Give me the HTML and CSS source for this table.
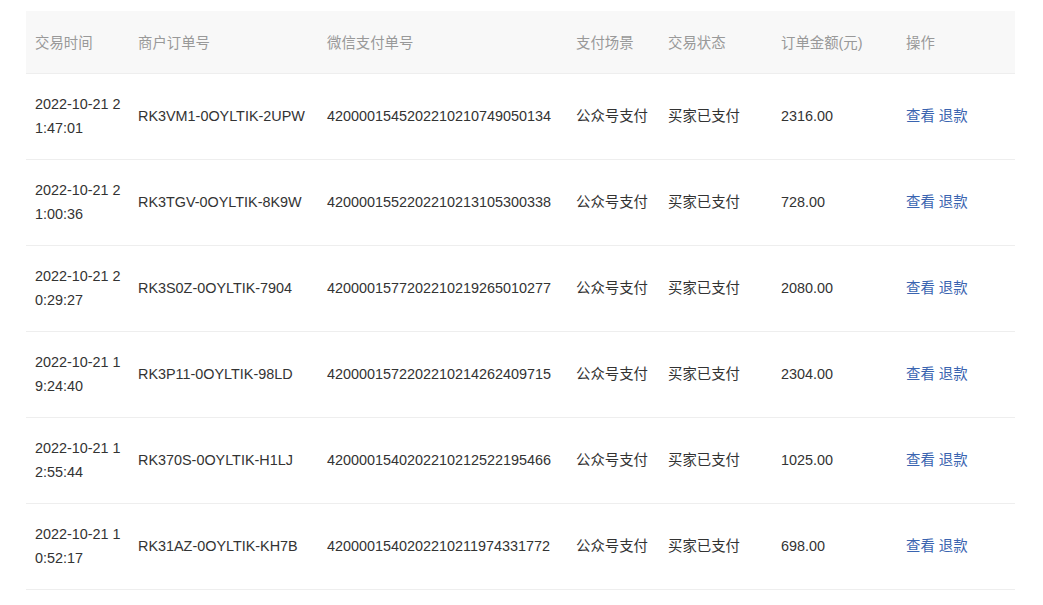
FILE: index.html
```html
<!DOCTYPE html>
<html lang="zh">
<head>
<meta charset="utf-8">
<title>交易记录</title>
<link rel="stylesheet" href="styles.css">
</head>
<body>
<table class="orders">
  <colgroup>
    <col class="c-time"><col class="c-mch"><col class="c-wx"><col class="c-scene"><col class="c-state"><col class="c-amt"><col class="c-op">
  </colgroup>
  <thead>
    <tr><th>交易时间</th><th>商户订单号</th><th>微信支付单号</th><th>支付场景</th><th>交易状态</th><th>订单金额(元)</th><th>操作</th></tr>
  </thead>
  <tbody>
    <tr><td class="time">2022-10-21 21:47:01</td><td>RK3VM1-0OYLTIK-2UPW</td><td>4200001545202210210749050134</td><td>公众号支付</td><td>买家已支付</td><td>2316.00</td><td><a href="#">查看</a> <a href="#">退款</a></td></tr>
    <tr><td class="time">2022-10-21 21:00:36</td><td>RK3TGV-0OYLTIK-8K9W</td><td>4200001552202210213105300338</td><td>公众号支付</td><td>买家已支付</td><td>728.00</td><td><a href="#">查看</a> <a href="#">退款</a></td></tr>
    <tr><td class="time">2022-10-21 20:29:27</td><td>RK3S0Z-0OYLTIK-7904</td><td>4200001577202210219265010277</td><td>公众号支付</td><td>买家已支付</td><td>2080.00</td><td><a href="#">查看</a> <a href="#">退款</a></td></tr>
    <tr><td class="time">2022-10-21 19:24:40</td><td>RK3P11-0OYLTIK-98LD</td><td>4200001572202210214262409715</td><td>公众号支付</td><td>买家已支付</td><td>2304.00</td><td><a href="#">查看</a> <a href="#">退款</a></td></tr>
    <tr><td class="time">2022-10-21 12:55:44</td><td>RK370S-0OYLTIK-H1LJ</td><td>4200001540202210212522195466</td><td>公众号支付</td><td>买家已支付</td><td>1025.00</td><td><a href="#">查看</a> <a href="#">退款</a></td></tr>
    <tr><td class="time">2022-10-21 10:52:17</td><td>RK31AZ-0OYLTIK-KH7B</td><td>4200001540202210211974331772</td><td>公众号支付</td><td>买家已支付</td><td>698.00</td><td><a href="#">查看</a> <a href="#">退款</a></td></tr>
  </tbody>
</table>
</body>
</html>
```
FILE: styles.css
```css
html, body {
  margin: 0;
  background: #fff;
}
body {
  padding: 11px 0 0 26px;
  font-family: "Liberation Sans", "Noto Sans CJK SC", sans-serif;
  font-size: 14.4px;
  color: #333;
}
.orders {
  width: 989px;
  table-layout: fixed;
  border-collapse: collapse;
}
.c-time { width: 103px; }
.c-mch { width: 189px; }
.c-wx { width: 249px; }
.c-scene { width: 92px; }
.c-state { width: 113px; }
.c-amt { width: 125px; }
.c-op { width: 118px; }
.orders th {
  height: 60px;
  padding: 0 9px 2px;
  background: #f8f8f8;
  color: #999;
  font-weight: normal;
  text-align: left;
  border-bottom: 1px solid #eeeeee;
}
.orders td {
  height: 83px;
  padding: 0 9px 2px;
  line-height: 24px;
  border-bottom: 1px solid #eeeeee;
  white-space: nowrap;
}
.orders td.time {
  padding-right: 4px;
  white-space: normal;
  word-break: break-all;
}
.orders a {
  color: #3a64b0;
  text-decoration: none;
}
```
